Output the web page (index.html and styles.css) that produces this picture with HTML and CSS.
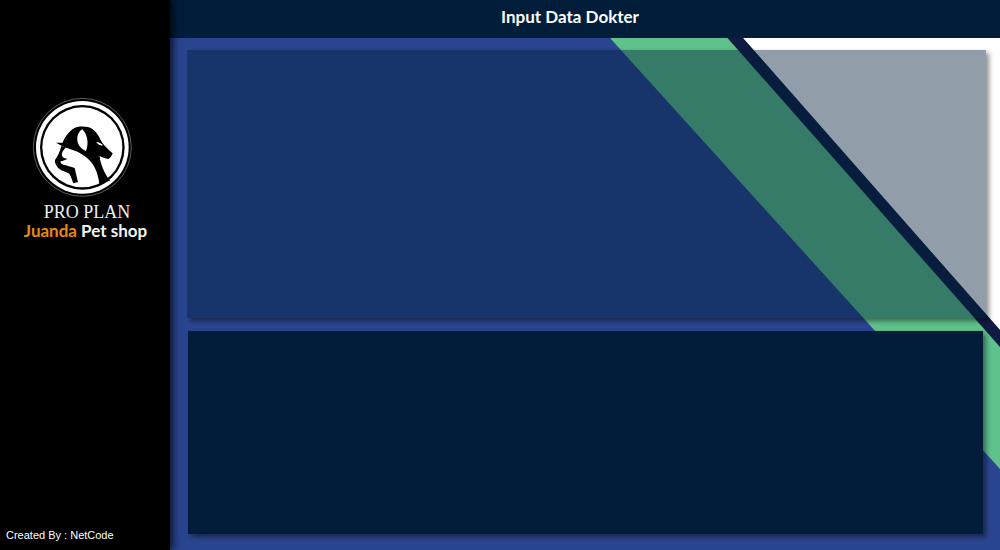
FILE: index.html
```
<!DOCTYPE html>
<html lang="id">
<head>
<meta charset="utf-8">
<title>Input Data Dokter</title>
<link rel="stylesheet" href="styles.css">
</head>
<body>
<div class="app">
  <aside class="sidebar">
    <div class="brand">
      <svg class="logo" viewBox="0 0 315 315" aria-hidden="true">
        <circle cx="157" cy="157" r="147" fill="none" stroke="#8a8a8a" stroke-width="2"/>
        <circle cx="157" cy="157" r="139" fill="#fff"/>
        <circle cx="157" cy="157" r="127" fill="#000"/>
        <circle cx="157" cy="157" r="120" fill="#fff"/>
        <g transform="translate(60 75)">
          <path fill="#000" d="M18 68 L38 68 C44 50 60 30 75 23 C88 18 114 18 127 27 C138 35 144 44 149 54 C155 70 172 86 188 100 C185 109 181 114 175 117 C165 115 157 112 149 108 C150 124 156 140 163 155 C169 167 175 176 180 182 L148 192 C145 165 136 142 124 127 C110 110 90 97 68 90 L40 80 Z"/>
          <path fill="#fff" d="M97 28 C87 33 81 46 82 60 C83 76 95 88 108 93 C115 76 116 47 97 28 Z"/>
          <path fill="#fff" d="M139 66 C147 66 154 70 159 76 C151 78 144 74 139 66 Z"/>
          <path fill="#000" d="M34 78 C30 94 24 108 15 120 C13 130 22 144 34 151 C44 156 56 158 60 164 C64 172 66 180 70 190 L84 186 C80 172 78 160 74 144 C62 140 50 136 40 134 C34 132 30 128 32 124 C40 122 46 120 52 116 C40 116 34 110 36 100 C38 94 42 88 48 82 Z"/>
        </g>
      </svg>
      <div class="brand-name">PRO PLAN</div>
      <div class="brand-sub"><span class="accent">Juanda</span> Pet shop</div>
    </div>
    <div class="credit">Created By : NetCode</div>
  </aside>
  <div class="content">
    <header class="topbar">Input Data Dokter</header>
    <main class="main">
      <svg class="backdrop" viewBox="0 0 830 512" preserveAspectRatio="none" aria-hidden="true">
        <polygon fill="#5fc18c" points="440,0 830,431 830,0"/>
        <polygon fill="#fff" points="573,0 830,0 830,292"/>
        <polygon fill="#0f1b42" points="557.5,0 573,0 830,292 830,309"/>
      </svg>
      <section class="panel panel-top"></section>
      <section class="panel panel-bottom"></section>
    </main>
  </div>
</div>
</body>
</html>
```
FILE: styles.css
```
* { box-sizing: border-box; }
html, body { margin: 0; height: 100%; }
body { background: #000; overflow: hidden; }
.app { display: flex; width: 1000px; height: 550px; }
.sidebar {
  width: 170px;
  flex: none;
  background: #000;
  color: #fff;
  display: flex;
  flex-direction: column;
  justify-content: space-between;
  box-shadow: 3px 0 8px rgba(0,0,0,.75);
  z-index: 2;
}
.brand { display: flex; flex-direction: column; align-items: center; padding-top: 95px; }
.logo { width: 105px; height: 105px; display: block; margin-left: -5px; }
.brand-name { font: 18px/20px "Liberation Serif", serif; color: #eee; margin-top: 2px; padding-left: 4px; }
.brand-sub { font: 700 17px/18px Lato, sans-serif; color: #f5f5f5; padding-left: 1px; }
.accent { color: #e88a10; }
.credit { font: 11px/13px "Liberation Sans", sans-serif; color: #fff; padding: 0 0 8px 6px; }
.content { flex: 1; display: flex; flex-direction: column; min-width: 0; }
.topbar {
  height: 38px;
  flex: none;
  background: #011d3a;
  color: #fff;
  font: 700 17px/34px Lato, sans-serif;
  text-align: center;
  padding-right: 30px;
}
.main {
  position: relative;
  flex: 1;
  background: #2a4590;
  display: flex;
  flex-direction: column;
  overflow: hidden;
}
.backdrop { position: absolute; inset: 0; width: 100%; height: 100%; }
.panel { position: relative; box-shadow: 3px 3px 5px rgba(0,0,0,.45); }
.panel-top { height: 268px; margin: 12px 14px 0 17px; background: rgba(1,30,58,.43); }
.panel-bottom { height: 203px; margin: 13px 17px 0 18px; background: #011d39; }
```
